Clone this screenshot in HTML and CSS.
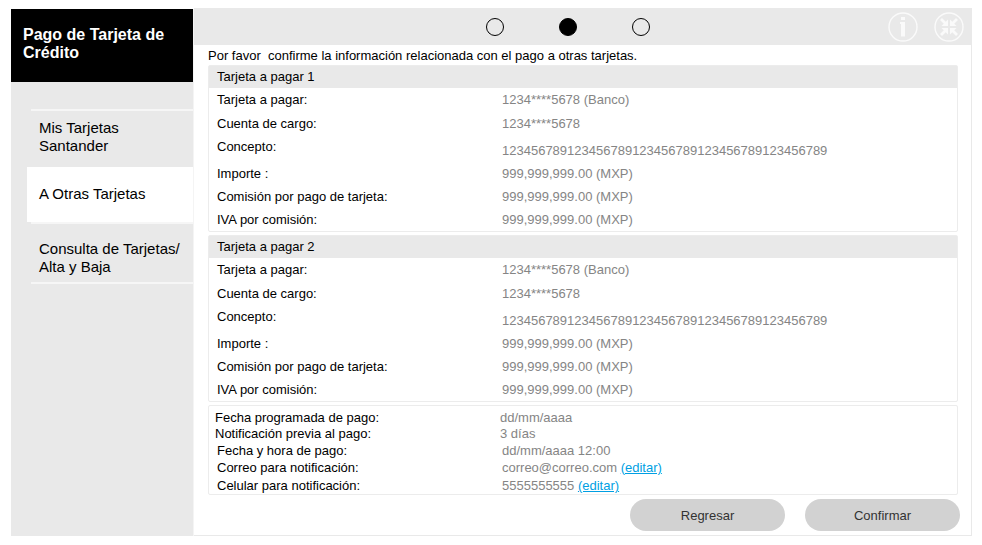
FILE: index.html
```html
<!DOCTYPE html>
<html lang="es">
<head>
<meta charset="utf-8">
<meta name="viewport" content="width=device-width, initial-scale=1">
<title>Pago de Tarjeta de Crédito</title>
<link rel="stylesheet" href="styles.css">
</head>
<body>
<div class="app">
  <aside class="sidebar">
    <h1 class="sidebar-title">Pago de Tarjeta de Crédito</h1>
    <nav class="menu">
      <a class="menu-item" href="#mis">Mis Tarjetas<br>Santander</a>
      <a class="menu-item menu-item-active" href="#otras">A Otras Tarjetas</a>
      <a class="menu-item" href="#consulta">Consulta de Tarjetas/<br>Alta y Baja</a>
    </nav>
  </aside>
  <main class="main">
    <header class="topbar">
      <div class="steps">
        <span class="step"></span>
        <span class="step step-current"></span>
        <span class="step"></span>
      </div>
      <div class="tools">
        <button class="tool" type="button" aria-label="Información">
          <svg viewBox="0 0 30 30" width="30" height="30" fill="none" stroke="#fafafa">
            <circle cx="15" cy="15" r="14" stroke-width="1.4"/>
            <path d="M13 5h4v3h-4zM12 10h5v14.500h-4V12h-1z" fill="#fafafa" stroke="none"/>
          </svg>
        </button>
        <button class="tool" type="button" aria-label="Contraer">
          <svg viewBox="0 0 30 30" width="30" height="30" fill="none" stroke="#fafafa">
            <circle cx="15" cy="15" r="14" stroke-width="1.4"/>
            <path d="M7 7l5 5M23 7l-5 5M7 23l5-5M23 23l-5-5" stroke-width="2.800"/>
            <path d="M14 7.500V14H7.500zM16 7.500V14h6.500zM14 22.500V16H7.500zM16 22.500V16h6.500z" fill="#fafafa" stroke="none"/>
          </svg>
        </button>
      </div>
    </header>
    <div class="content">
      <p class="intro">Por favor&nbsp; confirme la información relacionada con el pago a otras tarjetas.</p>
      <section class="card">
        <h2 class="card-title">Tarjeta a pagar 1</h2>
        <dl class="fields">
          <div class="row"><dt>Tarjeta a pagar:</dt><dd>1234****5678 (Banco)</dd></div>
          <div class="row"><dt>Cuenta de cargo:</dt><dd>1234****5678</dd></div>
          <div class="row row-concept"><dt>Concepto:</dt><dd>123456789123456789123456789123456789123456789</dd></div>
          <div class="row"><dt>Importe :</dt><dd>999,999,999.00 (MXP)</dd></div>
          <div class="row"><dt>Comisión por pago de tarjeta:</dt><dd>999,999,999.00 (MXP)</dd></div>
          <div class="row"><dt>IVA por comisión:</dt><dd>999,999,999.00 (MXP)</dd></div>
        </dl>
      </section>
      <section class="card">
        <h2 class="card-title">Tarjeta a pagar 2</h2>
        <dl class="fields">
          <div class="row"><dt>Tarjeta a pagar:</dt><dd>1234****5678 (Banco)</dd></div>
          <div class="row"><dt>Cuenta de cargo:</dt><dd>1234****5678</dd></div>
          <div class="row row-concept"><dt>Concepto:</dt><dd>123456789123456789123456789123456789123456789</dd></div>
          <div class="row"><dt>Importe :</dt><dd>999,999,999.00 (MXP)</dd></div>
          <div class="row"><dt>Comisión por pago de tarjeta:</dt><dd>999,999,999.00 (MXP)</dd></div>
          <div class="row"><dt>IVA por comisión:</dt><dd>999,999,999.00 (MXP)</dd></div>
        </dl>
      </section>
      <section class="card">
        <dl class="fields fields-schedule">
          <div class="row"><dt>Fecha programada de pago:</dt><dd>dd/mm/aaaa</dd></div>
          <div class="row"><dt>Notificación previa al pago:</dt><dd>3 días</dd></div>
        </dl>
        <dl class="fields fields-contact">
          <div class="row"><dt>Fecha y hora de pago:</dt><dd>dd/mm/aaaa 12:00</dd></div>
          <div class="row"><dt>Correo para notificación:</dt><dd>correo@correo.com <a href="#correo">(editar)</a></dd></div>
          <div class="row"><dt>Celular para notificación:</dt><dd>5555555555 <a href="#celular">(editar)</a></dd></div>
        </dl>
      </section>
      <div class="actions">
        <button class="button" type="button">Regresar</button>
        <button class="button" type="button">Confirmar</button>
      </div>
    </div>
  </main>
</div>
</body>
</html>
```
FILE: styles.css
```css
* {
  box-sizing: border-box;
}

body {
  margin: 8px 10px 8px 11px;
  background: #fff;
  color: #000;
  font: 13px/16px "Liberation Sans", Arial, sans-serif;
}

h1, h2, p, dl, dd {
  margin: 0;
}

.app {
  display: grid;
  grid-template-columns: 183px 1fr;
}

/* Sidebar */
.sidebar {
  margin-top: 1px;
  background: #e9e9e9;
  border-right: 1px solid #f4f4f4;
}

.sidebar-title {
  height: 73px;
  padding: 17px 12px 0;
  background: #000;
  color: #fff;
  font-size: 16px;
  line-height: 18px;
}

.menu {
  display: flex;
  flex-direction: column;
  margin: 27px 0 0 16px;
  background: linear-gradient(#f6f6f6, #f6f6f6) 4px 100% / 100% 2px no-repeat;
}

.menu-item {
  display: flex;
  align-items: center;
  height: 58px;
  padding: 0 0 2px 12px;
  background: linear-gradient(#f6f6f6, #f6f6f6) 4px 0 / 100% 2px no-repeat;
  color: #000;
  font-size: 15px;
  line-height: 18px;
  text-decoration: none;
}

.menu-item:last-child {
  height: 62px;
  padding-top: 12px;
}

.menu-item-active {
  height: 55px;
  background: #fff;
}

/* Main panel */
.main {
  border: solid #e9e9e9;
  border-width: 0 1px 1px 0;
}

.topbar {
  display: grid;
  grid-template-columns: 1fr auto 1fr;
  align-items: center;
  height: 37px;
  background: #e9e9e9;
}

.steps {
  grid-column: 2;
  display: flex;
  gap: 55px;
  margin-right: 30px;
}

.step {
  width: 18px;
  height: 18px;
  border: 1px solid #000;
  border-radius: 50%;
}

.step-current {
  background: #000;
}

.tools {
  display: flex;
  justify-content: flex-end;
  gap: 16px;
  padding-right: 7px;
}

.tool {
  width: 30px;
  height: 30px;
  padding: 0;
  border: 0;
  background: none;
}

.tool svg {
  display: block;
}

.content {
  padding: 3px 13px 4px 14px;
}

.intro {
  margin-bottom: 1px;
}

.card {
  margin-bottom: 3px;
  border: 1px solid #ececec;
  border-radius: 2px;
}

.card-title {
  padding: 3px 8px;
  background: #e9e9e9;
  font-size: 13px;
  font-weight: normal;
  line-height: 16px;
}

.fields {
  padding: 0 8px;
}

.row {
  display: grid;
  grid-template-columns: 285px 1fr;
  align-items: center;
  min-height: 23px;
}

.row:nth-child(-n+2) {
  min-height: 24px;
}

.row-concept {
  min-height: 26px;
  padding: 3px 0;
}

.row-concept dt {
  align-self: start;
}

.row-concept dd {
  align-self: end;
}

.row dd {
  color: #858585;
}

.row a {
  color: #009fe3;
}

.fields-schedule {
  padding: 4px 6px 0;
}

.fields-schedule .row:nth-child(n) {
  min-height: 16px;
}

.fields-contact .row:nth-child(n) {
  min-height: 17px;
}

.fields-contact .row:last-child {
  min-height: 18px;
  align-items: end;
}

.actions {
  display: flex;
  justify-content: flex-end;
  gap: 20px;
  margin: 4px -2px 0 0;
}

.button {
  width: 155px;
  height: 32px;
  padding: 1px 0 0;
  border: 0;
  border-radius: 16px;
  background: #d2d2d2;
  color: #333;
  font: inherit;
}
```
